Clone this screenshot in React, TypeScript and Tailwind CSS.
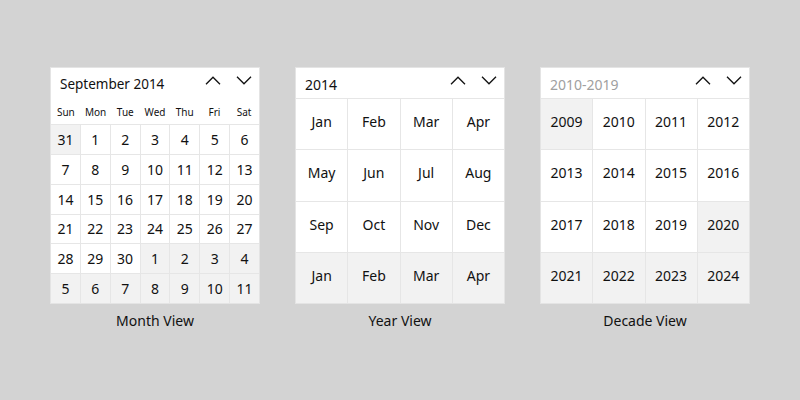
import React from "react";

const font = { fontFamily: '"Segoe UI", "Noto Sans", "Open Sans", sans-serif' };

function Chevrons() {
  return (
    <div className="flex items-center gap-[15px] pr-[7px] mb-[5px]">
      <svg width="16" height="9" viewBox="0 0 16 9" fill="none">
        <path d="M1 8.2 L8 1.2 L15 8.2" stroke="#111" strokeWidth="1.3" />
      </svg>
      <svg width="16" height="9" viewBox="0 0 16 9" fill="none">
        <path d="M1 0.8 L8 7.8 L15 0.8" stroke="#111" strokeWidth="1.3" />
      </svg>
    </div>
  );
}

function Card({ children }: { children: React.ReactNode }) {
  return (
    <div className="w-[210px] h-[237px] bg-white border border-[#e4e4e4] flex flex-col">
      {children}
    </div>
  );
}

function MonthView() {
  const days: { d: number; out: boolean }[] = [];
  days.push({ d: 31, out: true });
  for (let i = 1; i <= 30; i++) days.push({ d: i, out: false });
  for (let i = 1; i <= 11; i++) days.push({ d: i, out: true });
  const names = ["Sun", "Mon", "Tue", "Wed", "Thu", "Fri", "Sat"];
  return (
    <Card>
      <div className="h-[29px] flex items-center justify-between pl-[9px]">
        <span className="text-[13.5px] text-[#111] pt-[3px]">September 2014</span>
        <Chevrons />
      </div>
      <div className="h-[27px] grid grid-cols-7 items-center pt-[3px]">
        {names.map((n) => (
          <span key={n} className="text-center text-[10px] text-[#111]">
            {n}
          </span>
        ))}
      </div>
      <div className="flex-1 grid grid-cols-7 grid-rows-6 gap-px bg-[#e6e6e6] pt-px">
        {days.map((x, i) => (
          <div
            key={i}
            className={`flex items-center justify-center text-[14px] text-[#111] ${
              x.out ? "bg-[#f2f2f2]" : "bg-white"
            }`}
          >
            {x.d}
          </div>
        ))}
      </div>
    </Card>
  );
}

function GridView({
  title,
  titleGray,
  items,
}: {
  title: string;
  titleGray?: boolean;
  items: { t: string; out: boolean }[];
}) {
  return (
    <Card>
      <div className="h-[30px] flex items-center justify-between pl-[9px]">
        <span className={`text-[14px] pt-[3px] ${titleGray ? "text-[#a0a0a0]" : "text-[#111]"}`}>
          {title}
        </span>
        <Chevrons />
      </div>
      <div className="flex-1 grid grid-cols-4 grid-rows-4 gap-px bg-[#e6e6e6] pt-px">
        {items.map((x, i) => (
          <div
            key={i}
            className={`flex items-center justify-center pb-[5px] text-[14px] text-[#111] ${
              x.out ? "bg-[#f2f2f2]" : "bg-white"
            }`}
          >
            {x.t}
          </div>
        ))}
      </div>
    </Card>
  );
}

export default function App() {
  const months = ["Jan", "Feb", "Mar", "Apr", "May", "Jun", "Jul", "Aug", "Sep", "Oct", "Nov", "Dec"];
  const yearItems = [
    ...months.map((m) => ({ t: m, out: false })),
    ...months.slice(0, 4).map((m) => ({ t: m, out: true })),
  ];
  const decadeItems = Array.from({ length: 16 }, (_, i) => {
    const y = 2009 + i;
    return { t: String(y), out: y < 2010 || y > 2019 };
  });
  const cols: { label: string; el: React.ReactNode }[] = [
    { label: "Month View", el: <MonthView /> },
    { label: "Year View", el: <GridView title="2014" items={yearItems} /> },
    { label: "Decade View", el: <GridView title="2010-2019" titleGray items={decadeItems} /> },
  ];
  return (
    <div className="w-[800px] h-[400px] bg-[#d3d3d3] flex gap-[35px] pl-[50px] pt-[67px]" style={font}>
      {cols.map((c) => (
        <div key={c.label} className="flex flex-col items-center">
          {c.el}
          <div className="mt-[7px] text-[14px] text-[#111] leading-[20px]">{c.label}</div>
        </div>
      ))}
    </div>
  );
}
